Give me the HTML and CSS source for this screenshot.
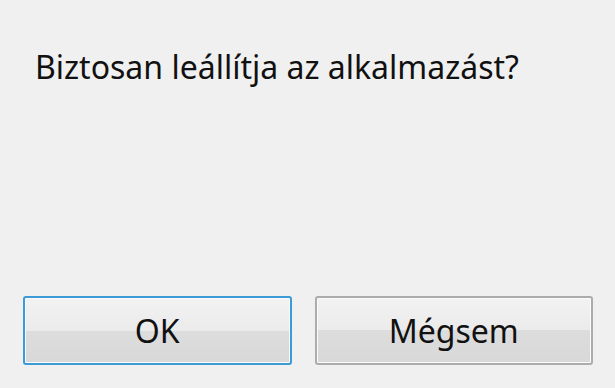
FILE: index.html
```html
<!DOCTYPE html>
<html lang="hu">
<head>
  <meta charset="UTF-8">
  <title>Megerősítés</title>
  <link rel="stylesheet" href="styles.css">
</head>
<body>
  <div class="dialog">
    <p class="message">Biztosan leállítja az alkalmazást?</p>
    <div class="button-group">
      <button class="btn btn-default">OK</button>
      <button class="btn">Mégsem</button>
    </div>
  </div>
</body>
</html>
```

FILE: styles.css
```css
body {
  margin: 0;
  background-color: #f0f0f0;
  font-family: "Noto Sans", "Open Sans", sans-serif;
  color: #111;
}

.dialog {
  height: 100vh;
  box-sizing: border-box;
  display: flex;
  flex-direction: column;
  justify-content: space-between;
  padding: 47px 22px 23px 23px;
}

.message {
  margin: 0 0 0 12px;
  font-size: 32px;
  line-height: 40px;
}

.button-group {
  display: flex;
  gap: 23px;
}

.btn {
  width: 279px;
  height: 69px;
  font-family: inherit;
  font-size: 32px;
  color: #111;
  border: 2px solid #acacac;
  border-radius: 3px;
  box-shadow: inset 0 0 0 1px #fbfbfb;
  background: linear-gradient(to bottom, #f2f2f2 0%, #ebebeb 50%, #dddddd 50%, #d8d8d8 100%);
  padding: 0;
}

.btn-default {
  width: 269px;
  border-color: #3c9ad6;
}
```
